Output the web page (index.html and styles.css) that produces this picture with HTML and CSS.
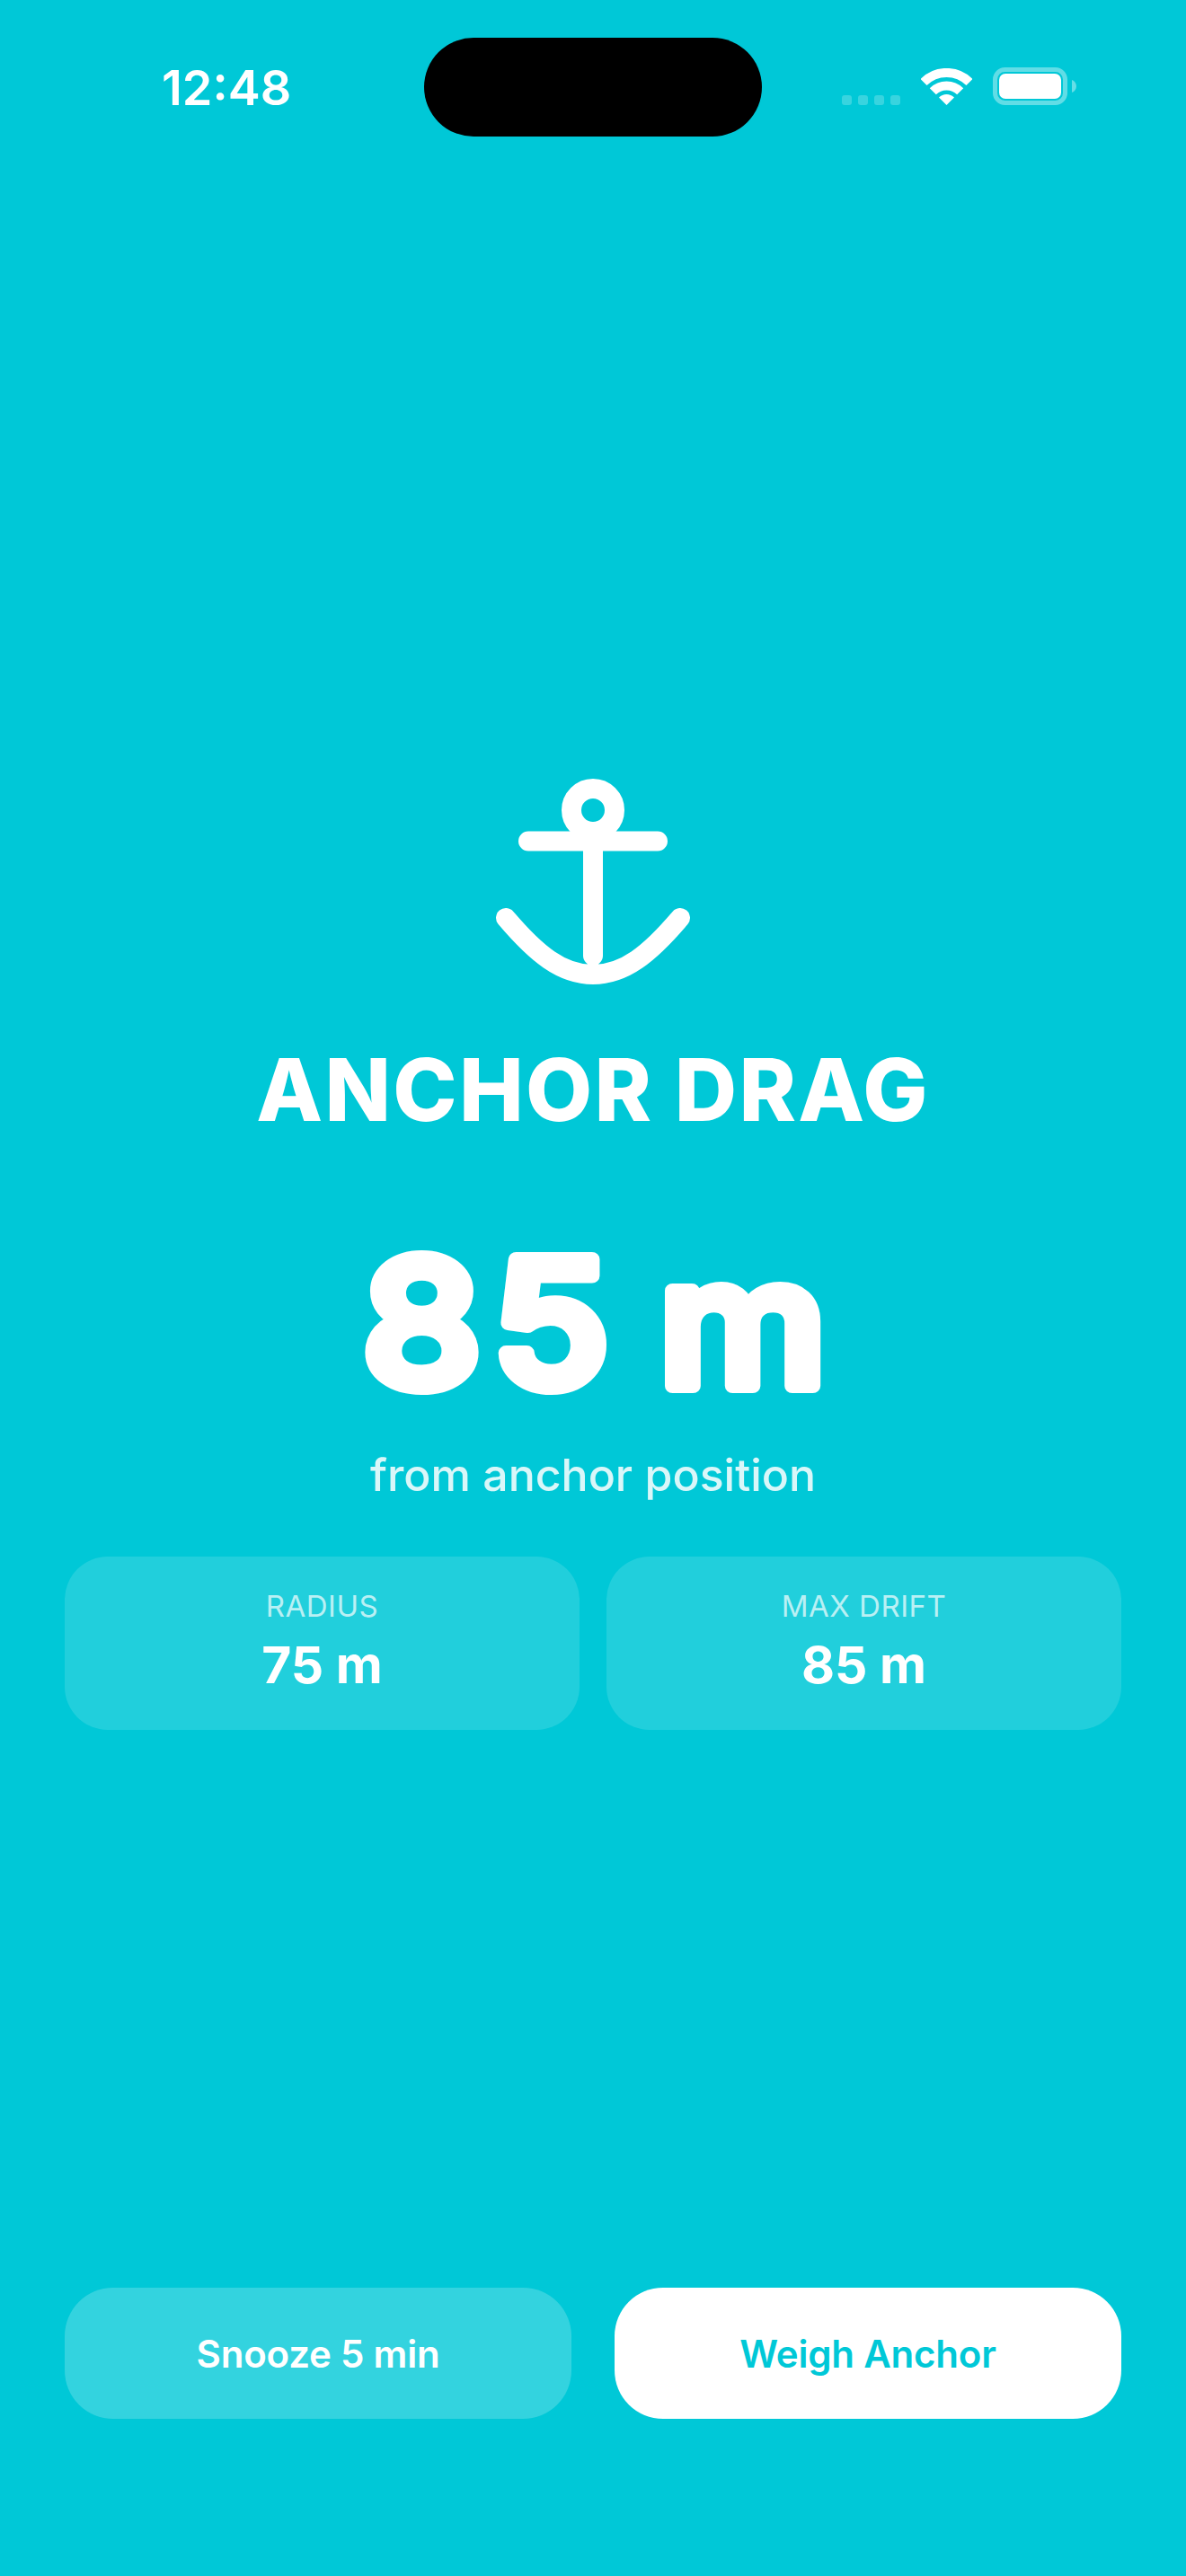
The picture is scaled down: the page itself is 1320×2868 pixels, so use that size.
FILE: index.html
```html
<!DOCTYPE html>
<html lang="en">
<head>
<meta charset="utf-8">
<title>Anchor Drag</title>
<link rel="stylesheet" href="styles.css">
</head>
<body>
<div class="screen">
  <header class="status">
    <div class="time">12:48</div>
    <div class="island"></div>
    <div class="sys">
      <svg class="signal" viewBox="0 0 65 11"><rect width="11" height="11" rx="3"/><rect x="18" width="11" height="11" rx="3"/><rect x="36" width="11" height="11" rx="3"/><rect x="54" width="11" height="11" rx="3"/></svg>
      <svg class="wifi" viewBox="0 0 57 41"><path class="arc" d="M3 15.5A36 36 0 0 1 54 15.5"/><path class="arc" d="M13.3 25.8A21.5 21.5 0 0 1 43.7 25.8"/><path class="wedge" d="M28.5 41L20 32.5A12 12 0 0 1 37 32.5Z"/></svg>
      <svg class="battery" viewBox="0 0 93 42"><rect class="shell" x="2.5" y="2.500" width="78" height="37" rx="11"/><rect class="cell" x="7" y="7" width="69" height="28" rx="7"/><path class="nub" d="M88 14C91 15 93 18 93 21S91 27 88 28Z"/></svg>
    </div>
  </header>
  <main class="alert">
    <svg class="anchor" viewBox="0 0 280 280"><circle cx="140" cy="62" r="24"/><path d="M68 96.500H212M140 96.500V224M43 182C77 222 105 245 140 245S203 222 237 182"/></svg>
    <h1 class="title">ANCHOR DRAG</h1>
    <svg class="distance" viewBox="0 0 1320 260"><text transform="translate(668 205) scale(1.08 1)">85<tspan dx="-24"> m</tspan></text></svg>
    <p class="caption">from anchor position</p>
    <section class="stats">
      <div class="stat"><div class="stat-label">RADIUS</div><div class="stat-value">75 m</div></div>
      <div class="stat"><div class="stat-label">MAX DRIFT</div><div class="stat-value">85 m</div></div>
    </section>
    <div class="actions">
      <button class="btn btn-ghost">Snooze 5 min</button>
      <button class="btn btn-solid">Weigh Anchor</button>
    </div>
  </main>
</div>
</body>
</html>
```
FILE: styles.css
```css
* { box-sizing: border-box; }
html, body { margin: 0; padding: 0; }
body { background: #00c8d7; font-family: Inter, "Liberation Sans", sans-serif; color: #fff; }
.screen { width: 1320px; height: 2868px; display: flex; flex-direction: column; overflow: hidden; }

.status { height: 152px; flex: none; display: grid; grid-template-columns: 1fr 376px 1fr; padding-top: 42px; }
.time { font-size: 54px; font-weight: 600; line-height: 60px; padding: 26px 0 0 180px; }
.island { height: 110px; background: #000; border-radius: 55px; }
.sys { display: flex; align-items: flex-end; height: 75px; padding-left: 89px; }
.signal { width: 65px; height: 11px; fill: rgba(255,255,255,.22); }
.wifi { width: 57px; height: 41px; margin-left: 23px; }
.arc { fill: none; stroke: #fff; stroke-width: 10; }
.wedge { fill: #fff; }
.battery { width: 93px; height: 42px; margin-left: 23px; }
.shell { fill: none; stroke: rgba(255,255,255,.38); stroke-width: 5; }
.cell { fill: #fff; }
.nub { fill: rgba(255,255,255,.4); }

.alert { flex: 1; display: flex; flex-direction: column; align-items: center; padding: 688px 72px 175px; }
.anchor { width: 280px; height: 280px; flex: none; fill: none; stroke: #fff; stroke-width: 22; stroke-linecap: round; }
.title { margin: 35px 0 0; font-size: 96px; font-weight: 800; line-height: 116px; letter-spacing: 2.3px; }
.distance { width: 1320px; height: 260px; flex: none; margin-top: 67px; }
.distance text { font-size: 194px; font-weight: 500; letter-spacing: 12px; text-anchor: middle; fill: #fff; stroke: #fff; stroke-width: 16; stroke-linejoin: round; }
.caption { margin: 13px 0 0; font-size: 50px; font-weight: 500; line-height: 62px; color: rgba(255,255,255,.85); }
.stats { width: 100%; display: grid; grid-template-columns: 1fr 1fr; gap: 30px; margin-top: 60px; }
.stat { height: 193px; border-radius: 48px; background: rgba(255,255,255,.13); text-align: center; padding-top: 35px; }
.stat-label { font-size: 33px; line-height: 40px; color: rgba(255,255,255,.7); letter-spacing: .5px; }
.stat-value { font-size: 57px; font-weight: 700; line-height: 66px; margin-top: 13px; }
.actions { width: 100%; display: grid; grid-template-columns: 564px 564px; justify-content: space-between; margin-top: auto; }
.btn { height: 146px; border: 0; border-radius: 54px; font: 600 42px Inter, "Liberation Sans", sans-serif; letter-spacing: -.2px; }
.btn-ghost { background: rgba(255,255,255,.2); color: #fff; }
.btn-solid { background: #fff; color: #00c8d7; }
```
